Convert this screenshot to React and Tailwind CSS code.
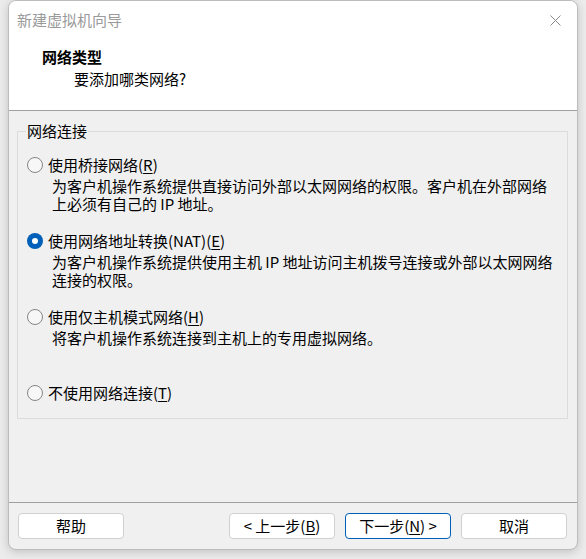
import React, { useState } from 'react';

const options = [
  {
    id: 'bridged',
    label: '使用桥接网络',
    key: 'R',
    desc: ['为客户机操作系统提供直接访问外部以太网网络的权限。客户机在外部网络', '上必须有自己的 IP 地址。'],
  },
  {
    id: 'nat',
    label: '使用网络地址转换(NAT)',
    key: 'E',
    desc: ['为客户机操作系统提供使用主机 IP 地址访问主机拨号连接或外部以太网网络', '连接的权限。'],
  },
  {
    id: 'hostonly',
    label: '使用仅主机模式网络',
    key: 'H',
    desc: ['将客户机操作系统连接到主机上的专用虚拟网络。'],
  },
  {
    id: 'none',
    label: '不使用网络连接',
    key: 'T',
    desc: [],
  },
];

const Radio = ({ checked }) =>
  checked ? (
    <span className="flex h-[16px] w-[16px] shrink-0 items-center justify-center rounded-full bg-[#005fb8]">
      <span className="h-[6px] w-[6px] rounded-full bg-white" />
    </span>
  ) : (
    <span className="h-[16px] w-[16px] shrink-0 rounded-full border border-[#858585] bg-[#f7f7f7]" />
  );

const Button = ({ children, primary }) => (
  <button
    type="button"
    className={`h-[26px] w-[106px] rounded-[4px] border bg-white text-[15px] leading-[20px] text-black ${
      primary ? 'border-[#005fb8]' : 'border-[#d0d0d0]'
    }`}
  >
    {children}
  </button>
);

export default function App() {
  const [selected, setSelected] = useState('nat');

  return (
    <div className="min-h-screen w-full bg-[#ececec] px-[8px] font-['Noto_Sans_CJK_SC','Microsoft_YaHei',sans-serif] text-black">
      <div className="flex h-[550px] w-[570px] flex-col overflow-hidden rounded-[8px] border border-[#bcbcbc] bg-[#f0f0f0] shadow-[0_2px_10px_rgba(0,0,0,0.18)]">
        {/* header */}
        <div className="h-[110px] shrink-0 border-b border-[#a0a0a0] bg-white">
          <div className="flex h-[38px] items-center justify-between pl-[8px] pr-[16px]">
            <span className="text-[15px] leading-[20px] text-[#9a9a9a]">新建虚拟机向导</span>
            <svg width="11" height="11" viewBox="0 0 11 11" className="text-[#8a8a8a]">
              <path d="M0.5 0.5 L10.5 10.5 M10.5 0.5 L0.5 10.5" stroke="currentColor" strokeWidth="1" fill="none" />
            </svg>
          </div>
          <div className="mt-[8px] pl-[33px] text-[15px] font-bold leading-[20px]">网络类型</div>
          <div className="mt-[2px] pl-[65px] text-[15px] leading-[20px]">要添加哪类网络?</div>
        </div>

        {/* body */}
        <div className="flex-1 pl-[8px] pr-[9px] pt-[10px]">
          <fieldset className="h-[298px] border border-[#dcdcdc] pb-[15px] pl-[9px] pt-[14px]">
            <legend className="-ml-[1px] px-[1px] text-[15px] leading-[20px]">网络连接</legend>
            <div className="flex flex-col">
              {options.map((o, i) => (
                <div
                  key={o.id}
                  className={i < options.length - 1 ? 'h-[76px]' : ''}
                  onClick={() => setSelected(o.id)}
                >
                  <div className="flex h-[20px] items-center gap-[5px]">
                    <Radio checked={selected === o.id} />
                    <span className="text-[15px] leading-[20px]">
                      {o.label}(<span className="underline underline-offset-2">{o.key}</span>)
                    </span>
                  </div>
                  {o.desc.length > 0 && (
                    <div className="ml-[25px] mt-[2px] text-[15px] leading-[18px]">
                      {o.desc.map((line) => (
                        <div key={line} className="whitespace-nowrap">{line}</div>
                      ))}
                    </div>
                  )}
                </div>
              ))}
            </div>
          </fieldset>
        </div>

        {/* footer */}
        <div className="flex h-[47px] shrink-0 items-start justify-between border-t border-[#a0a0a0] pl-[9px] pr-[10px] pt-[10px]">
          <Button>帮助</Button>
          <div className="flex gap-[10px]">
            <Button>
              &lt; 上一步(<span className="underline underline-offset-2">B</span>)
            </Button>
            <Button primary>
              下一步(<span className="underline underline-offset-2">N</span>) &gt;
            </Button>
            <Button>取消</Button>
          </div>
        </div>
      </div>
    </div>
  );
}
